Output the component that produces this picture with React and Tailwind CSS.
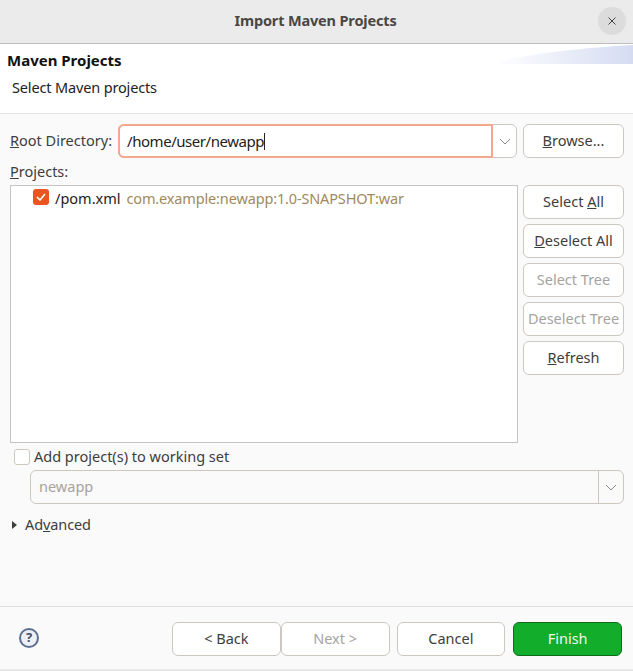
const font = { fontFamily: '"Noto Sans", sans-serif' };

const sideButtons = [
  { before: "Select ", key: "A", after: "ll" },
  { before: "", key: "D", after: "eselect All" },
  { before: "Select Tree", disabled: true },
  { before: "Deselect Tree", disabled: true },
  { before: "", key: "R", after: "efresh" },
];

const Chevron = ({ className }) => (
  <svg width="12" height="7" viewBox="0 0 12 7" fill="none" className={className}>
    <path d="M1 1l5 5 5-5" stroke="currentColor" strokeWidth="1" />
  </svg>
);

const Btn = ({ className = "", disabled, children }) => (
  <button
    className={`h-[34px] rounded-[6px] border border-[#cdc7c2] bg-white whitespace-nowrap text-[14.5px] flex items-center justify-center ${
      disabled ? "text-[#a5a3a0] bg-[#fafafa]" : "text-[#3d3d3d]"
    } ${className}`}
  >
    {children}
  </button>
);

const App = () => {
  return (
    <div
      className="w-[633px] h-[671px] flex flex-col bg-[#fafafa] text-[#3d3d3d] text-[14.5px] overflow-hidden"
      style={font}
    >
      {/* title bar */}
      <div className="h-[44px] shrink-0 bg-[#ebebeb] border-b border-[#bdbdbd] flex items-center justify-center relative">
        <span className="font-bold text-[14.5px] tracking-[-0.15px] text-[#4a4644] pr-[2px] pb-[2px]">Import Maven Projects</span>
        <div className="absolute right-[7px] top-[7px] w-[28px] h-[28px] rounded-full bg-[#dcdcdc] flex items-center justify-center">
          <svg width="8" height="8" viewBox="0 0 8 8" fill="none">
            <path d="M.5.5l7 7M7.5.5l-7 7" stroke="#4a4644" strokeWidth="1" />
          </svg>
        </div>
      </div>

      {/* banner */}
      <div className="h-[70px] shrink-0 bg-white border-b border-[#e4e4e4] relative overflow-hidden">
        <svg className="absolute right-0 top-0" width="138" height="20" viewBox="0 0 138 20">
          <defs>
            <linearGradient id="banner" x1="0" x2="1" y1="0" y2="0">
              <stop offset="0" stopColor="#ffffff" />
              <stop offset="1" stopColor="#d5dcf2" />
            </linearGradient>
          </defs>
          <path d="M0 19C30 10 85 4 138 1V20H0z" fill="url(#banner)" />
        </svg>
        <div className="relative pl-[7px] pt-[6px] font-bold text-[15px] leading-[20px] text-[#111]">Maven Projects</div>
        <div className="relative pl-[12px] pt-[7px] text-[14.5px] tracking-[-0.15px] leading-[20px] text-[#222]">Select Maven projects</div>
      </div>

      {/* body */}
      <div className="flex-1 flex flex-col px-[9px] pt-[10px]">
        <div className="flex items-center h-[34px]">
          <span className="pl-[1px] w-[109px] shrink-0">
            <u>R</u>oot Directory:
          </span>
          <div className="w-[399px] h-[34px] flex rounded-[6px] border border-[#cdc7c2] bg-white">
            <div className="w-[375px] -m-[1px] h-[34px] rounded-l-[6px] border-2 border-[#f4a78f] flex items-center pl-[7px] text-[15px] text-[#222] tracking-[-0.45px]">
              /home/user/newapp
              <span className="w-[1px] h-[17px] bg-[#222]" />
            </div>
            <div className="flex-1 flex items-center justify-center text-[#8a8a8a] pl-[2px]">
              <Chevron />
            </div>
          </div>
          <Btn className="w-[101px] ml-[6px]">
            <span>
              <u>B</u>rowse...
            </span>
          </Btn>
        </div>

        <div className="pl-[1px] mt-[4px] h-[22px] leading-[19px]">
          <u>P</u>rojects:
        </div>

        <div className="flex mt-[1px]">
          <div className="ml-[1px] w-[508px] h-[258px] border border-[#c5c5c5] bg-white flex items-start pl-[22px] pt-[2px]">
            <div className="w-[16px] h-[16px] mt-[1px] rounded-[3px] bg-[#e95420] flex items-center justify-center shrink-0">
              <svg width="10" height="8" viewBox="0 0 10 8" fill="none">
                <path d="M1 4l3 3 5-6" stroke="#fff" strokeWidth="1.6" />
              </svg>
            </div>
            <span className="ml-[6px] text-[#222]">/pom.xml</span>
            <span className="ml-[6px] text-[#a08a5c] tracking-[-0.15px]">com.example:newapp:1.0-SNAPSHOT:war</span>
          </div>
          <div className="ml-[5px] w-[101px] flex flex-col gap-[5px]">
            {sideButtons.map((b) => (
              <Btn key={b.before + (b.after || "")} disabled={b.disabled} className="w-full">
                <span>
                  {b.before}
                  {b.key && <u>{b.key}</u>}
                  {b.after}
                </span>
              </Btn>
            ))}
          </div>
        </div>

        <div className="flex items-center h-[20px] mt-[4px] ml-[5px]">
          <div className="w-[16px] h-[16px] rounded-[3px] border border-[#cdc7c2] bg-white shrink-0" />
          <span className="ml-[4px]">Add project(s) to working set</span>
        </div>

        <div className="ml-[21px] mt-[3px] w-[594px] h-[34px] rounded-[6px] border border-[#cdc7c2] flex bg-[#fafafa]">
          <div className="flex-1 flex items-center pl-[8px] text-[#a5a3a0]">newapp</div>
          <div className="w-[25px] border-l border-[#cdc7c2] flex items-center justify-center text-[#8a8a8a]">
            <Chevron />
          </div>
        </div>

        <div className="flex items-center mt-[11px] ml-[3px] h-[20px]">
          <svg width="5" height="8" viewBox="0 0 5 8">
            <path d="M0 0l5 4-5 4z" fill="#3d3d3d" />
          </svg>
          <span className="ml-[8px] tracking-[-0.1px]">
            Ad<u>v</u>anced
          </span>
        </div>
      </div>

      {/* footer */}
      <div className="h-[65px] shrink-0 border-t border-[#e0e0e0] border-b-2 border-b-[#e8e8e8] flex items-start pt-[15px] pl-[19px] pr-[11px]">
        <div className="w-[20px] h-[20px] mt-[6px] rounded-full border-2 border-[#5c6f91] bg-[#eef0f5] flex items-center justify-center font-bold text-[13px] text-[#3f4f6b]">
          ?
        </div>
        <Btn className="w-[109px] ml-[133px]">&lt; Back</Btn>
        <Btn disabled className="w-[109px]">Next &gt;</Btn>
        <Btn className="w-[109px] ml-[7px]">Cancel</Btn>
        <Btn className="w-[109px] ml-[8px] !bg-[#12ad2b] !border-[#0c6b1c] !text-[#f4f7ee]">Finish</Btn>
      </div>
    </div>
  );
};

export default App;
